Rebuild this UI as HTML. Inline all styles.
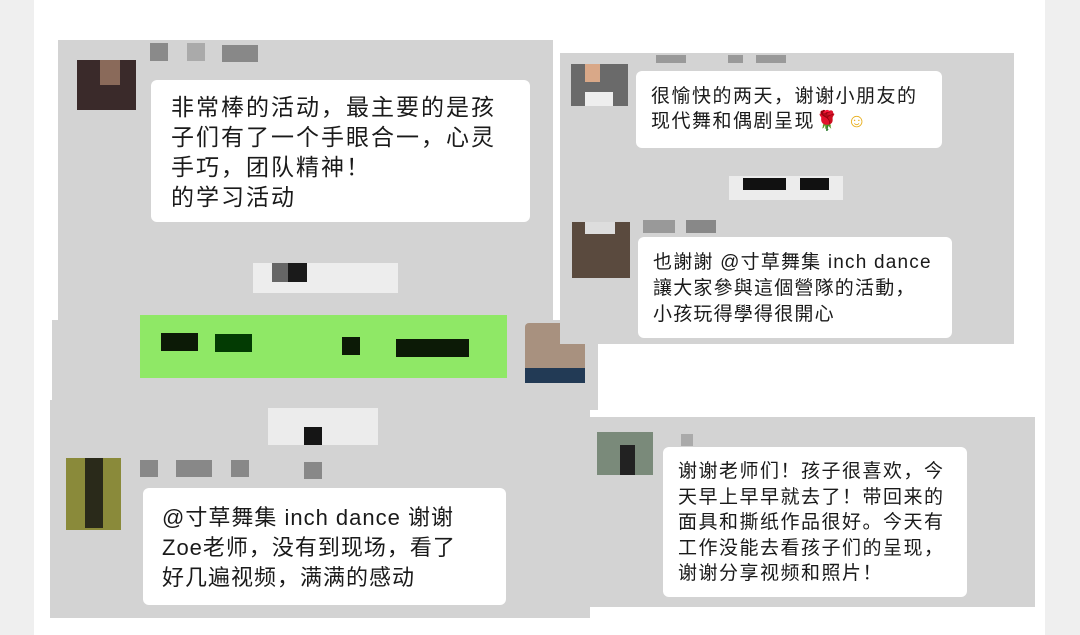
<!DOCTYPE html>
<html><head><meta charset="utf-8"><style>
*{margin:0;padding:0;box-sizing:border-box}
body{width:1080px;height:635px;background:#fff;position:relative;overflow:hidden;font-family:"Liberation Sans","Noto Sans CJK SC",sans-serif;color:#1a1a1a}
.a{position:absolute}
.p{background:#d3d3d3}
.b{background:#fff;border-radius:6px}
.t{position:absolute;white-space:nowrap}
</style></head><body>
<div class="a" style="left:0;top:0;width:34px;height:635px;background:#efefef"></div>
<div class="a" style="left:1045px;top:0;width:35px;height:635px;background:#efefef"></div>

<!-- left panel -->
<div class="a p" style="left:58px;top:40px;width:495px;height:290px"></div>
<div class="a p" style="left:52px;top:320px;width:546px;height:90px"></div>
<div class="a p" style="left:50px;top:400px;width:540px;height:218px"></div>
<div class="a" style="left:77px;top:60px;width:59px;height:50px;background:#3a2a2a"></div>
<div class="a" style="left:100px;top:60px;width:20px;height:25px;background:#8a6a5a"></div>
<div class="a" style="left:150px;top:43px;width:18px;height:18px;background:#8a8a8a"></div>
<div class="a" style="left:187px;top:43px;width:18px;height:18px;background:#aaa"></div>
<div class="a" style="left:222px;top:45px;width:36px;height:17px;background:#888"></div>
<div class="a b" style="left:151px;top:80px;width:379px;height:142px"></div>
<div class="t" style="left:171px;top:92px;font-size:23px;line-height:30px;letter-spacing:2px">非常棒的活动，最主要的是孩<br>子们有了一个手眼合一，心灵<br>手巧，团队精神！<br>的学习活动</div>

<div class="a" style="left:253px;top:263px;width:145px;height:30px;background:#ededed"></div>
<div class="a" style="left:272px;top:263px;width:16px;height:19px;background:#666"></div>
<div class="a" style="left:288px;top:263px;width:19px;height:19px;background:#1a1a1a"></div>

<div class="a" style="left:140px;top:315px;width:367px;height:63px;background:#8fe866"></div>
<div class="a" style="left:161px;top:333px;width:37px;height:18px;background:#0c1a06"></div>
<div class="a" style="left:215px;top:334px;width:37px;height:18px;background:#033b03"></div>
<div class="a" style="left:342px;top:337px;width:18px;height:18px;background:#0c1a06"></div>
<div class="a" style="left:396px;top:339px;width:73px;height:18px;background:#0c1a06"></div>
<div class="a" style="left:525px;top:323px;width:60px;height:60px;background:#a8917f;border-radius:4px"></div>
<div class="a" style="left:525px;top:368px;width:60px;height:15px;background:#223a55"></div>

<div class="a" style="left:268px;top:408px;width:110px;height:37px;background:#ececec"></div>
<div class="a" style="left:304px;top:427px;width:18px;height:18px;background:#151515"></div>
<div class="a" style="left:140px;top:460px;width:18px;height:17px;background:#888"></div>
<div class="a" style="left:176px;top:460px;width:36px;height:17px;background:#888"></div>
<div class="a" style="left:231px;top:460px;width:18px;height:17px;background:#888"></div>
<div class="a" style="left:304px;top:462px;width:18px;height:17px;background:#888"></div>
<div class="a" style="left:66px;top:458px;width:55px;height:72px;background:#8a8a3a"></div>
<div class="a" style="left:85px;top:458px;width:18px;height:70px;background:#2a2a1a"></div>
<div class="a b" style="left:143px;top:488px;width:363px;height:117px"></div>
<div class="t" style="left:162px;top:503px;font-size:22px;line-height:30px;letter-spacing:1px">@寸草舞集 inch dance 谢谢<br>Zoe老师，没有到现场，看了<br>好几遍视频，满满的感动</div>

<!-- right top panel -->
<div class="a p" style="left:560px;top:53px;width:454px;height:291px"></div>
<div class="a" style="left:571px;top:64px;width:57px;height:42px;background:#6a6a6a"></div>
<div class="a" style="left:585px;top:64px;width:15px;height:18px;background:#d9a888"></div>
<div class="a" style="left:585px;top:92px;width:28px;height:14px;background:#eee"></div>
<div class="a" style="left:656px;top:55px;width:30px;height:8px;background:#999"></div>
<div class="a" style="left:728px;top:55px;width:15px;height:8px;background:#999"></div>
<div class="a" style="left:756px;top:55px;width:30px;height:8px;background:#999"></div>
<div class="a b" style="left:636px;top:71px;width:306px;height:77px"></div>
<div class="t" style="left:651px;top:84px;font-size:19px;line-height:25px;letter-spacing:1.5px">很愉快的两天，谢谢小朋友的<br>现代舞和偶剧呈现<span style="color:#c22">🌹</span> <span style="color:#e8b020">☺</span></div>
<div class="a" style="left:729px;top:176px;width:114px;height:24px;background:#ececec"></div>
<div class="a" style="left:743px;top:178px;width:43px;height:12px;background:#111"></div>
<div class="a" style="left:800px;top:178px;width:29px;height:12px;background:#111"></div>
<div class="a" style="left:572px;top:222px;width:58px;height:56px;background:#5a4a3e"></div>
<div class="a" style="left:585px;top:222px;width:30px;height:12px;background:#ddd"></div>
<div class="a" style="left:643px;top:220px;width:32px;height:13px;background:#999"></div>
<div class="a" style="left:686px;top:220px;width:30px;height:13px;background:#888"></div>
<div class="a b" style="left:638px;top:237px;width:314px;height:101px"></div>
<div class="t" style="left:653px;top:250px;font-size:19px;line-height:26px;letter-spacing:1.2px">也謝謝 @寸草舞集 inch dance<br>讓大家參與這個營隊的活動，<br>小孩玩得學得很開心</div>

<!-- right bottom panel -->
<div class="a p" style="left:587px;top:417px;width:448px;height:190px"></div>
<div class="a" style="left:597px;top:432px;width:56px;height:43px;background:#7a8a7a"></div>
<div class="a" style="left:620px;top:445px;width:15px;height:30px;background:#222"></div>
<div class="a" style="left:681px;top:434px;width:12px;height:12px;background:#aaa"></div>
<div class="a b" style="left:663px;top:447px;width:304px;height:150px"></div>
<div class="t" style="left:678px;top:459px;font-size:19px;line-height:25.5px;letter-spacing:1.5px">谢谢老师们！孩子很喜欢，今<br>天早上早早就去了！带回来的<br>面具和撕纸作品很好。今天有<br>工作没能去看孩子们的呈现，<br>谢谢分享视频和照片！</div>
</body></html>
